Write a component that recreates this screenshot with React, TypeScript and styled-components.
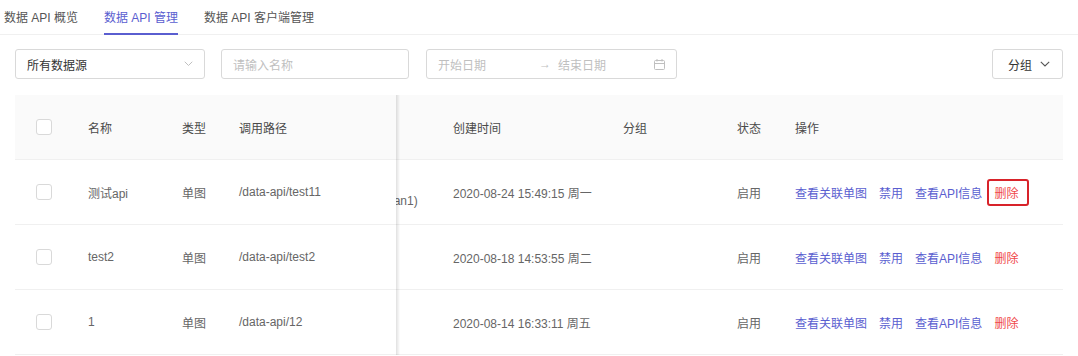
import { useLayoutEffect, useRef } from 'react'
import styled, { createGlobalStyle, css } from 'styled-components'

const GlobalStyle = createGlobalStyle`
  body {
    margin: 0;
    background: #fff;
    font-family: "Liberation Sans", "Noto Sans CJK SC", sans-serif;
    font-size: 12px;
    color: #666;
  }
`

const rows = [
    { id: 1, name: '测试api', type: '单图', path: '/data-api/test11', source: ['MySQL', '(tests_chan1)'], created: '2020-08-24 15:49:15 周一', status: '启用', marked: true },
    { id: 2, name: 'test2', type: '单图', path: '/data-api/test2', source: ['test_cha'], created: '2020-08-18 14:53:55 周二', status: '启用', marked: false },
    { id: 3, name: '1', type: '单图', path: '/data-api/12', source: ['test_cha'], created: '2020-08-14 16:33:11 周五', status: '启用', marked: false },
]

// fixed columns: checkbox, 名称, 类型, 调用路径
const fixedLeft = [0, 57, 151, 208]
const colWidths = [57, 94, 57, 173, 108, 170, 114, 58, 284]

const Chevron = ({ size = 10, color = '#bfbfbf' }) => (
    <svg width={size} height={size * 0.6} viewBox="0 0 10 6" fill="none">
        <path d="M0.8 0.8 L5 5 L9.2 0.8" stroke={color} strokeWidth="1.1" />
    </svg>
)

const CalendarIcon = () => (
    <svg width="11" height="11" viewBox="0 0 11 11" fill="none" stroke="#bfbfbf" strokeWidth="1">
        <rect x="0.5" y="1.5" width="10" height="9" rx="1" />
        <path d="M0.5 4.5 H10.5 M3 0 V2.5 M8 0 V2.5" />
    </svg>
)

const App = () => {
    const scrollRef = useRef<HTMLDivElement>(null)

    useLayoutEffect(() => {
        const el = scrollRef.current
        if (el) el.scrollLeft = el.scrollWidth - el.clientWidth
    }, [])

    return (
        <>
        <GlobalStyle />
        <TabBar>
            <Tab>数据 API 概览</Tab>
            <Tab $active>数据 API 管理</Tab>
            <Tab>数据 API 客户端管理</Tab>
        </TabBar>
        <FilterBar>
            <SelectBox>
                <span>所有数据源</span>
                <Chevron size={9} />
            </SelectBox>
            <TextInput>请输入名称</TextInput>
            <DateRange>
                <DateText>开始日期</DateText>
                <RangeArrow>→</RangeArrow>
                <DateText $grow>结束日期</DateText>
                <CalendarIcon />
            </DateRange>
            <GroupButton>
                分组
                <Chevron size={10} color="#555" />
            </GroupButton>
        </FilterBar>
        <TableScroll ref={scrollRef}>
            <Table>
                <colgroup>
                    {colWidths.map((w, i) => <col key={i} style={{ width: w }} />)}
                </colgroup>
                <thead>
                    <tr>
                        <HeadCell $left={fixedLeft[0]} $center><Checkbox /></HeadCell>
                        <HeadCell $left={fixedLeft[1]}>名称</HeadCell>
                        <HeadCell $left={fixedLeft[2]}>类型</HeadCell>
                        <HeadCell $left={fixedLeft[3]} $edge>调用路径</HeadCell>
                        <HeadCell>数据源</HeadCell>
                        <HeadCell>创建时间</HeadCell>
                        <HeadCell>分组</HeadCell>
                        <HeadCell>状态</HeadCell>
                        <HeadCell>操作</HeadCell>
                    </tr>
                </thead>
                <tbody>
                    {rows.map(row => (
                        <tr key={row.id}>
                            <Cell $left={fixedLeft[0]} $center><Checkbox /></Cell>
                            <Cell $left={fixedLeft[1]}>{row.name}</Cell>
                            <Cell $left={fixedLeft[2]}>{row.type}</Cell>
                            <Cell $left={fixedLeft[3]} $edge>{row.path}</Cell>
                            <Cell>
                                {row.source.map(line => <SourceLine key={line}>{line}</SourceLine>)}
                            </Cell>
                            <Cell>{row.created}</Cell>
                            <Cell></Cell>
                            <Cell>{row.status}</Cell>
                            <Cell>
                                <Actions>
                                    <ActionLink>查看关联单图</ActionLink>
                                    <ActionLink>禁用</ActionLink>
                                    <ActionLink>查看API信息</ActionLink>
                                    <ActionLink $danger $marked={row.marked}>删除</ActionLink>
                                </Actions>
                            </Cell>
                        </tr>
                    ))}
                </tbody>
            </Table>
        </TableScroll>
        </>
    )
}

export default App

const purple = '#5a5ed0'

const TabBar = styled.div`
    display: flex;
    height: 35px;
    padding-left: 4px;
    border-bottom: 1px solid #f0f0f0;
    box-sizing: border-box;
`

const Tab = styled.div<{ $active?: boolean }>`
    position: relative;
    display: flex;
    align-items: center;
    padding-bottom: 2px;
    margin-right: 26px;
    font-size: 12px;
    color: ${p => p.$active ? purple : '#555'};
    ${p => p.$active && css`
        &::after {
            content: '';
            position: absolute;
            left: 0;
            right: 0;
            bottom: -1px;
            height: 2px;
            background: ${purple};
        }
    `}
`

const FilterBar = styled.div`
    display: flex;
    align-items: center;
    padding: 14px 15px 0;
`

const fieldBox = css`
    display: flex;
    align-items: center;
    height: 30px;
    box-sizing: border-box;
    border: 1px solid #d9d9d9;
    border-radius: 3px;
    background: #fff;
    white-space: nowrap;
`

const SelectBox = styled.div`
    ${fieldBox}
    width: 190px;
    padding: 0 11px;
    justify-content: space-between;
    color: #333;
`

const TextInput = styled.div`
    ${fieldBox}
    width: 188px;
    margin-left: 16px;
    padding: 0 11px;
    color: #bfbfbf;
`

const DateRange = styled.div`
    ${fieldBox}
    width: 251px;
    margin-left: 17px;
    padding: 0 11px;
    color: #bfbfbf;
`

const DateText = styled.span<{ $grow?: boolean }>`
    width: ${p => p.$grow ? 'auto' : '101px'};
    flex: ${p => p.$grow ? 1 : 'none'};
`

const RangeArrow = styled.span`
    width: 10px;
    margin-right: 9px;
    color: #bfbfbf;
`

const GroupButton = styled.div`
    ${fieldBox}
    margin-left: auto;
    width: 71px;
    padding: 0 11px 0 15px;
    gap: 8px;
    color: #333;
`

const TableScroll = styled.div`
    margin: 16px 15px 0;
    overflow: hidden;
`

const Table = styled.table`
    table-layout: fixed;
    width: 1115px;
    border-collapse: separate;
    border-spacing: 0;
`

const cellBase = css<{ $left?: number; $edge?: boolean; $center?: boolean }>`
    height: 65px;
    box-sizing: border-box;
    padding: 0 16px;
    text-align: ${p => p.$center ? 'center' : 'left'};
    border-bottom: 1px solid #f0f0f0;
    white-space: nowrap;
    font-size: 12px;
    ${p => p.$center && css`padding: 0;`}
    ${p => p.$left !== undefined && css`
        position: sticky;
        left: ${p.$left}px;
        z-index: 2;
    `}
    ${p => p.$edge && css`
        &::after {
            content: '';
            position: absolute;
            top: 0;
            bottom: -1px;
            right: -4px;
            width: 4px;
            background: linear-gradient(to right, rgba(0, 0, 0, 0.12), rgba(0, 0, 0, 0));
        }
    `}
`

const HeadCell = styled.th<{ $left?: number; $edge?: boolean; $center?: boolean }>`
    ${cellBase}
    background: #fafafa;
    font-weight: normal;
    color: #4a4a4a;
`

const Cell = styled.td<{ $left?: number; $edge?: boolean; $center?: boolean }>`
    ${cellBase}
    background: #fff;
    color: #666;
`

const Checkbox = styled.span`
    display: inline-block;
    width: 16px;
    height: 16px;
    box-sizing: border-box;
    border: 1px solid #d9d9d9;
    border-radius: 3px;
    background: #fff;
    vertical-align: middle;
`

const SourceLine = styled.div`
    line-height: 18px;
`

const Actions = styled.div`
    display: flex;
    gap: 12px;
`

const ActionLink = styled.span<{ $danger?: boolean; $marked?: boolean }>`
    position: relative;
    color: ${p => p.$danger ? '#f04848' : purple};
    cursor: pointer;
    ${p => p.$marked && css`
        &::after {
            content: '';
            position: absolute;
            top: -5px;
            bottom: -5px;
            left: -7px;
            right: -11px;
            border: 2px solid #d8232a;
            border-radius: 3px;
        }
    `}
`
